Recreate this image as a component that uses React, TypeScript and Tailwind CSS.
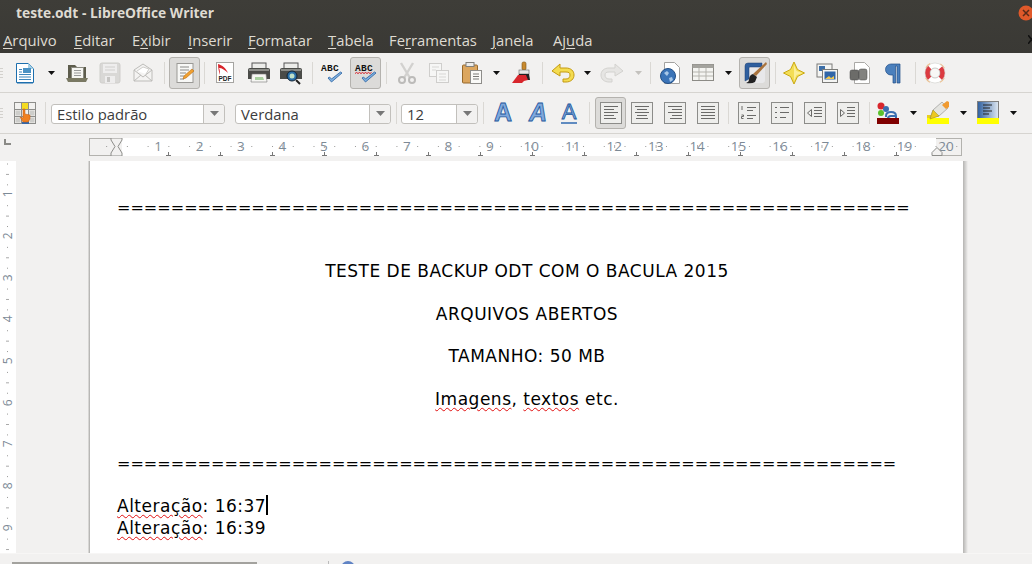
import React from "react";

const sans = "font-['Open_Sans',sans-serif]";

function Grip() {
  return (
    <div className="w-[3px] flex flex-col gap-[2px]">
      <div className="h-px bg-[#d3d1cd]" />
      <div className="h-px bg-[#d3d1cd]" />
      <div className="h-px bg-[#d3d1cd]" />
      <div className="h-px bg-[#d3d1cd]" />
    </div>
  );
}

function Sep({ className }: { className: string }) {
  return <div className={`w-px h-[22px] bg-[#dad8d4] ${className}`} />;
}

function Arrow({ className, grey }: { className: string; grey?: boolean }) {
  return (
    <svg width="7" height="4" viewBox="0 0 7 4" className={className}>
      <path d="M0 0h7L3.5 4z" fill={grey ? "#c4c2be" : "#111"} />
    </svg>
  );
}

function Pressed({ className, children }: { className: string; children: React.ReactNode }) {
  return (
    <div className={`w-[31px] h-[32px] flex items-center justify-center rounded-[3px] border border-[#b4b2ae] bg-[#dcdbd9] ${className}`}>
      {children}
    </div>
  );
}

function Ico({ className, w = 24, children }: { className?: string; w?: number; children: React.ReactNode }) {
  return (
    <svg width={w} height="24" viewBox={`0 0 ${w} 24`} className={`shrink-0 ${className ?? ""}`}>
      {children}
    </svg>
  );
}

function NewDoc({ className }: { className: string }) {
  return (
    <Ico className={className} w={22}>
      <path d="M2.5 2.5h12l5 5v14h-17z" fill="#fff" stroke="#1d6fae" />
      <path d="M14 2l6 6h-6z" fill="#a5d0e6" />
      <path d="M3 21h16v1.5H3z" fill="#1d6fae" />
      <rect x="9" y="7" width="8" height="5" fill="#4a92c4" />
      <path d="M5 8.500h3M5 11h3M5 13.500h12M5 16h12M5 18.500h12" stroke="#3d86bb" />
    </Ico>
  );
}

function OpenFolder({ className }: { className: string }) {
  return (
    <Ico className={className}>
      <path d="M3 4h7l2 2h9v11H3z" fill="#5d5c4c" />
      <rect x="6.500" y="6.500" width="12" height="11" fill="#f5f5f2" stroke="#8a8a80" />
      <path d="M9 9.500h7M9 12h7M9 14.500h7" stroke="#999" />
      <path d="M1 17h22l-2 4H3z" fill="#7a7963" />
    </Ico>
  );
}

function Save({ className }: { className: string }) {
  return (
    <Ico className={className}>
      <rect x="2" y="2" width="20" height="20" rx="2" fill="#d9d8d6" stroke="#cfcecb" />
      <rect x="5" y="3" width="14" height="9" fill="#eeeded" />
      <path d="M7 6h10M7 9h10" stroke="#d0cfcd" />
      <rect x="7" y="15" width="10" height="7" fill="#eeeded" />
      <rect x="9" y="16" width="3" height="5" fill="#c6c5c3" />
    </Ico>
  );
}

function Mail({ className }: { className: string }) {
  return (
    <Ico className={className} w={22}>
      <path d="M2 9l9-6 9 6v11H2z" fill="#f4f3f2" stroke="#bdbcb9" />
      <path d="M5 10l6-4 6 2-3 5" fill="#fff" stroke="#cfcecb" />
      <path d="M2 9l9 7 9-7M2 20l7-6M20 20l-7-6" fill="none" stroke="#bdbcb9" />
    </Ico>
  );
}

function EditDoc() {
  return (
    <Ico>
      <rect x="4" y="2.5" width="16" height="19" fill="#f8f8f6" stroke="#9a9996" />
      <path d="M7 6h9M7 9h9M7 12h6M7 15h4M7 18h4" stroke="#8a8a88" />
      <path d="M10 18l1-3 8-7 2 2-8 7z" fill="#f0a030" stroke="#b86c10" strokeWidth=".6" />
    </Ico>
  );
}

function Pdf({ className }: { className: string }) {
  return (
    <Ico className={className} w={22}>
      <rect x="2.5" y="1.5" width="17" height="20" fill="#fff" stroke="#a5a4a1" />
      <path d="M4 3c4 1 8 4 10 9-3-3-6-5-9-5 1 2 1 4 1 7-1-3-2-7-2-11z" fill="#d8262c" />
      <text x="4.5" y="20" fontSize="6.5" fontWeight="700" fontFamily="Liberation Sans" fill="#222">PDF</text>
    </Ico>
  );
}

function Printer({ className, zoom }: { className: string; zoom?: boolean }) {
  return (
    <Ico className={className}>
      <rect x="5" y="2" width="14" height="6" fill="#ececea" stroke="#555" />
      <path d="M1 9q0-2 2-2h18q2 0 2 2v9H1z" fill="#4a4b48" />
      <path d="M2 8h20v2H2z" fill="#8b8c88" />
      {zoom ? (
        <>
          <circle cx="13" cy="15" r="5" fill="#2a6fa8" stroke="#123" />
          <circle cx="13" cy="15" r="2.5" fill="#bfe0c8" />
          <path d="M17 19l4 4" stroke="#222" strokeWidth="2" />
        </>
      ) : (
        <>
          <path d="M5 13h14l1 8H4z" fill="#f6f6f3" stroke="#777" strokeWidth=".6" />
          <path d="M8 16h8l1 3H8z" fill="#a9d0a0" />
        </>
      )}
    </Ico>
  );
}

function Abc({ wave }: { wave?: boolean }) {
  return (
    <Ico>
      <text x="1" y="10" fontSize="9.5" fontWeight="700" fontFamily="Liberation Mono" fill="#111" letterSpacing=".3">ABC</text>
      {wave && <path d="M1 12.5l1.5-1 1.5 1 1.5-1 1.5 1 1.5-1 1.5 1 1.5-1 1.5 1 1.5-1 1.5 1 1.5-1" fill="none" stroke="#d8202a" />}
      <path d="M8 17l3.5 4L22 12l-1.5-1-9 7-2-2z" fill="#7fb0e0" stroke="#27609f" strokeWidth=".8" />
    </Ico>
  );
}

function Cut({ className }: { className: string }) {
  return (
    <Ico className={className} w={22}>
      <path d="M5 2l9 15M17 2L8 17" stroke="#d2d1cf" strokeWidth="2.4" />
      <circle cx="6" cy="19" r="3" fill="none" stroke="#bcbbb9" strokeWidth="2" />
      <circle cx="16" cy="19" r="3" fill="none" stroke="#bcbbb9" strokeWidth="2" />
    </Ico>
  );
}

function Copy({ className }: { className: string }) {
  return (
    <Ico className={className} w={22}>
      <rect x="1.5" y="2.5" width="12" height="13" fill="#f6f6f5" stroke="#cfcecc" />
      <rect x="8.5" y="9.5" width="12" height="12" fill="#f6f6f5" stroke="#cfcecc" />
      <path d="M4 6h7M4 9h4M11 13h7M11 16h7M11 19h7" stroke="#d8d7d5" />
    </Ico>
  );
}

function Paste({ className }: { className: string }) {
  return (
    <Ico className={className} w={22}>
      <rect x="1.5" y="4" width="15" height="18" rx="1" fill="#dca65e" stroke="#97682a" />
      <rect x="5" y="1.5" width="8" height="4" fill="#ececea" stroke="#807f7a" />
      <rect x="9.5" y="9.5" width="11" height="13" fill="#fafaf8" stroke="#8e8d8a" />
      <path d="M12 13h6M12 15.5h6M12 18h6" stroke="#7a7a78" />
    </Ico>
  );
}

function Brush({ className }: { className: string }) {
  return (
    <Ico className={className} w={22}>
      <rect x="11" y="1" width="4" height="8" rx="1.5" fill="#c98a2e" stroke="#7b5314" strokeWidth=".6" />
      <rect x="8" y="9" width="10" height="4" fill="#e8e8e6" stroke="#666" strokeWidth=".6" />
      <path d="M8 13h10l1 6H6z" fill="#222" />
      <path d="M1 22l6-8h8l2 5-4 1-2 2z" fill="#d8262c" />
    </Ico>
  );
}

function Undo({ className, grey }: { className: string; grey?: boolean }) {
  const fill = grey ? "#e6e5e3" : "#f4dc50";
  const line = grey ? "#d3d2cf" : "#c49a10";
  return (
    <Ico className={className}>
      <g transform={grey ? "matrix(-1 0 0 1 24 0)" : undefined}>
        <path d="M1 10l8-7v4h6c5 0 8 3 8 7s-3 7-8 7h-3v-3h3c3 0 4-2 4-4s-1-3-4-3H9v4z" fill={fill} stroke={line} />
      </g>
    </Ico>
  );
}

function GlobeDoc({ className }: { className: string }) {
  return (
    <Ico className={className} w={22}>
      <path d="M5.5 1.5h10l5 5v16h-15z" fill="#fff" stroke="#a3a2a0" />
      <circle cx="9" cy="15" r="7.5" fill="#3b74b8" stroke="#234f86" />
      <path d="M5 12l3-2 2 2-2 3zM10 17l3-1 1 3-3 2z" fill="#a9c8e8" />
    </Ico>
  );
}

function TableIcon({ className }: { className: string }) {
  return (
    <Ico className={className} w={22}>
      <rect x="0.5" y="3.5" width="21" height="16" fill="#f4f4f1" stroke="#8c8b86" />
      <rect x="0.5" y="3.5" width="21" height="3.5" fill="#a4a39e" />
      <path d="M7 7v12M14 7v12M1 11h20M1 15h20" stroke="#b5b4ae" />
    </Ico>
  );
}

function Draw() {
  return (
    <Ico>
      <rect x="2" y="2" width="20" height="20" rx="3" fill="#e8e8ea" />
      <path d="M2 20V5q0-3 3-3h14v4H7q-1 0-1 1v11z" fill="#2f5f9e" stroke="#1f3f70" strokeWidth=".5" />
      <path d="M23 1l1 2-11 12-3-2z" fill="#a9743e" />
      <path d="M10 13l4 3-2 5q-3 2-9 1 3-1 3-3 0-5 4-6z" fill="#222" />
    </Ico>
  );
}

function Star({ className }: { className: string }) {
  return (
    <Ico className={className} w={22}>
      <path d="M11 1l3.500 7.500L21.500 12l-7 3.500L11 23l-3.500-7.500L.5 12l7-3.500z" fill="#f3dd55" stroke="#c9a812" />
      <path d="M11 4l2.500 6 6 2-6 2-2.500 6z" fill="#fbef9a" />
    </Ico>
  );
}

function Gallery({ className }: { className: string }) {
  return (
    <Ico className={className} w={22}>
      <rect x="1" y="3" width="15" height="13" fill="#f5f5f3" stroke="#7b7b78" />
      <rect x="3" y="5" width="6" height="5" fill="#3c6ea8" />
      <rect x="6.5" y="8.5" width="15" height="13" fill="#f5f5f3" stroke="#7b7b78" />
      <rect x="8.5" y="10.5" width="11" height="8" fill="#2f65a8" />
      <path d="M9 18l4-3 2 2 3-2v3z" fill="#f0c850" />
    </Ico>
  );
}

function Database({ className }: { className: string }) {
  return (
    <Ico className={className} w={22}>
      <path d="M5.5 1.5h10l5 5v16h-15z" fill="#fff" stroke="#aaa9a6" />
      <rect x="1" y="9" width="9" height="10" rx="2" fill="#6c6c69" stroke="#444" strokeWidth=".5" />
      <rect x="10" y="8" width="8" height="11" rx="2" fill="#82827f" stroke="#444" strokeWidth=".5" />
    </Ico>
  );
}

function Pilcrow({ className }: { className: string }) {
  return (
    <Ico className={className} w={22}>
      <path d="M18 3H9a5.500 5.500 0 0 0 0 11h2v8h2.500V5h1.500v17H18z" fill="#4b80bd" stroke="#224f88" strokeWidth=".7" />
    </Ico>
  );
}

function Help({ className }: { className: string }) {
  return (
    <Ico className={className} w={22}>
      <circle cx="11" cy="12" r="10.500" fill="none" stroke="#efc08c" strokeWidth="1.200" strokeDasharray="6 10.490" strokeDashoffset="-5.250" />
      <circle cx="11" cy="12" r="7.500" fill="none" stroke="#fff" strokeWidth="5" />
      <circle cx="11" cy="12" r="7.500" fill="none" stroke="#dc3a40" strokeWidth="5" strokeDasharray="11.780 11.780" strokeDashoffset="5.890" />
      <circle cx="11" cy="12" r="10" fill="none" stroke="#c9c8c5" strokeWidth=".5" />
      <circle cx="11" cy="12" r="5" fill="#f8f8f6" stroke="#a8a7a4" strokeWidth=".6" />
    </Ico>
  );
}

function Styles({ className }: { className: string }) {
  return (
    <Ico className={className} w={22}>
      <rect x="0.5" y="1.500" width="21" height="21" fill="#f2f1ef" stroke="#8d8d8a" />
      <path d="M7.500 2v20M14.500 2v20M1 8.500h20M1 15.500h20" stroke="#8d8d8a" />
      <rect x="1.500" y="9.500" width="5" height="5" fill="#cdcdca" />
      <rect x="1.500" y="16.500" width="5" height="5" fill="#cdcdca" />
      <rect x="15.500" y="9.500" width="5" height="5" fill="#cdcdca" />
      <rect x="15.500" y="16.500" width="5" height="5" fill="#cdcdca" />
      <rect x="8" y="2" width="6" height="6" fill="#f4dc20" />
      <rect x="8" y="21" width="7" height="2" fill="#3467a8" />
      <path d="M9 8h2v5l5 1v4l-2 3H9l-3-5 3 1z" fill="#f08020" stroke="#c05a10" strokeWidth=".5" />
    </Ico>
  );
}

function Combo({ text, className, w }: { text: string; className: string; w: string }) {
  return (
    <div className={`h-[20px] mt-[1px] flex items-stretch rounded-[3px] border border-[#c2c0bc] bg-white ${w} ${className}`}>
      <div className="flex-1 pl-[5px] text-[14.800px] leading-[18px] text-[#3c3c3c] font-['Open_Sans',sans-serif] whitespace-nowrap overflow-hidden">{text}</div>
      <div className="w-[21px] flex items-center justify-center border-l border-[#c2c0bc] bg-[#f2f1f0] rounded-r-[3px]">
        <svg width="9" height="5" viewBox="0 0 9 5">
          <path d="M0 0h9L4.500 5z" fill="#777" />
        </svg>
      </div>
    </div>
  );
}

function LetterA({ className, italic, under, w }: { className: string; italic?: boolean; under?: boolean; w: number }) {
  return (
    <Ico className={`overflow-visible ${className}`} w={w}>
      <text
        x={w / 2}
        y={under ? 18 : 20}
        textAnchor="middle"
        fontSize={under ? 22 : 25}
        fontWeight={under ? 400 : 700}
        fontStyle={italic ? "italic" : "normal"}
        fontFamily="Liberation Sans"
        fill="#7fa8dc"
        stroke="#23589c"
        strokeWidth=".8"
      >
        A
      </text>
      {under && <path d="M1 22h16" stroke="#2f68b0" strokeWidth="1.500" />}
    </Ico>
  );
}

function Align({ className, lines }: { className?: string; lines: string }) {
  return (
    <Ico className={className} w={22}>
      <rect x="0.500" y="1.500" width="21" height="21" fill="#eeeeec" stroke="#8c8c89" />
      <path d={lines} stroke="#6a6a68" fill="none" />
    </Ico>
  );
}

function CharColor({ className }: { className: string }) {
  return (
    <Ico className={className} w={22}>
      <circle cx="4" cy="5" r="3.500" fill="#d8262c" />
      <circle cx="4" cy="12" r="3" fill="#5cc02c" />
      <circle cx="9" cy="8" r="3" fill="#3a6fb0" />
      <path d="M9 16v-1q0-4 5-4t5 4v5h-5q-3 0-3-2.500t3-2.500h4" fill="none" stroke="#3a6fb0" strokeWidth="2" />
      <rect x="0" y="17" width="22" height="6" fill="#800000" />
    </Ico>
  );
}

function Highlight({ className }: { className: string }) {
  return (
    <Ico className={className} w={22}>
      <rect x="0" y="17" width="22" height="6" fill="#ffff00" />
      <rect x="0" y="14" width="6" height="3" fill="#e8d020" />
      <path d="M3 17l3-8 9-8 6 6-9 8z" fill="#e4e4e0" stroke="#8a8a86" strokeWidth=".6" />
      <path d="M3 18l3-9 6 6z" fill="#ecc820" stroke="#a08a10" strokeWidth=".5" />
      <path d="M15 4l5-4 2 1v5l-3 2z" fill="#f09a30" />
    </Ico>
  );
}

function BgColor({ className }: { className: string }) {
  return (
    <Ico className={className} w={22}>
      <rect x="0.500" y="0.500" width="21" height="17" fill="url(#bgc)" stroke="#808080" />
      <defs>
        <linearGradient id="bgc" x1="0" x2="1">
          <stop offset="0" stopColor="#2f5f9e" />
          <stop offset="1" stopColor="#dfe8f2" />
        </linearGradient>
      </defs>
      <path d="M6 4h9M6 7h7M6 10h9M6 13h6" stroke="#222" />
      <rect x="0" y="17" width="22" height="6" fill="#ffff00" />
    </Ico>
  );
}

const cmNumbers = [1, 2, 3, 4, 5, 6, 7, 8, 9, 10, 11, 12, 13, 14, 15, 16, 17, 18, 19, 20];
const cm = 41.47;

function HRuler() {
  const ticks: number[] = [];
  for (let i = -1; i < 41; i++) ticks.push(i);
  const tabs: number[] = [];
  for (let x = 79; x < 840; x += 52) tabs.push(x);
  return (
    <div className="relative ml-[89px] mt-[4px] w-[873px] h-[18px] flex">
      <div className="w-[33px] border border-r-0 border-[#b3b2ae]" />
      <div className="flex-1 bg-white" />
      <div className="w-[26px] border border-l-0 border-[#b3b2ae]" />
      <div className="absolute inset-0 pl-[48.300px] flex">
        {cmNumbers.map((n) => (
          <span key={n} className="w-[41.470px] shrink-0 text-center text-[13.500px] leading-[17px] text-[#7d8a96] font-['Open_Sans',sans-serif]">
            {n}
          </span>
        ))}
      </div>
      <svg width="873" height="18" className="absolute left-0 top-0">
        {ticks.map((i) => {
          const x = 27.5 + (i * cm) / 2 + cm / 4;
          return <rect key={i} x={x} y="8" width="1" height="1" fill="#9a9a98" />;
        })}
        {ticks.map((i) => {
          const x = 27.5 + (i * cm) / 2 + cm / 4 + cm / 4;
          return i % 2 !== 0 ? <rect key={"m" + i} x={x} y="7" width="1" height="3" fill="#aaa" /> : null;
        })}
        {tabs.map((x) => (
          <path key={x} d={`M${x - 2} 17.500h5M${x + 0.5} 14v3`} stroke="#777" fill="none" />
        ))}
        <path d="M22 0h11v2l-4 6.500 4 6.500v3H22v-3l4-6.500-4-6.500z" fill="#f2f1f0" stroke="#8d8d8a" />
        <path d="M843 17.500v-3l5-5 5 5v3z" fill="#f2f1f0" stroke="#8d8d8a" />
      </svg>
    </div>
  );
}

function VRuler() {
  const dots: number[] = [];
  for (let i = 0; i < 40; i++) dots.push(i);
  return (
    <div className="relative w-[16px] h-full bg-white shrink-0 overflow-hidden">
      <div className="pt-[12.150px] flex flex-col items-center">
        {cmNumbers.slice(0, 9).map((n) => (
          <span key={n} className="h-[41.700px] w-[16px] shrink-0 flex items-center justify-center -rotate-90 text-[12px] text-[#7d8a96] font-['Open_Sans',sans-serif]">
            {n}
          </span>
        ))}
      </div>
      <svg width="16" height="400" className="absolute left-0 top-0">
        {dots.map((i) => {
          const y = 2.5 + i * 10.42;
          if (i % 4 === 3) return null;
          return i % 4 === 1 ? (
            <rect key={i} x="6" y={y} width="3" height="1" fill="#aaa" />
          ) : (
            <rect key={i} x="7" y={y} width="1" height="1" fill="#9a9a98" />
          );
        })}
      </svg>
    </div>
  );
}

function Spell({ children }: { children: string }) {
  return <span className="underline decoration-wavy decoration-[#e01010] decoration-1 underline-offset-2">{children}</span>;
}

function Line({ className, children }: { className?: string; children?: React.ReactNode }) {
  return <div className={`h-[21.400px] leading-[21.400px] whitespace-nowrap ${className ?? ""}`}>{children}</div>;
}

function Menu({ u, rest, pre, className }: { u: string; rest: string; pre?: string; className: string }) {
  return (
    <span className={`whitespace-nowrap ${className}`}>
      {pre}
      <span className="underline underline-offset-2">{u}</span>
      {rest}
    </span>
  );
}

export default function App() {
  return (
    <div className="w-[1032px] h-[564px] overflow-hidden flex flex-col bg-[#f2f1f0]">
      {/* barra de titulo e menu */}
      <div className={`relative h-[53px] shrink-0 bg-linear-to-b from-[#3e3d38] to-[#3a3935] text-[#dfdbd2] ${sans}`}>
        <div className="h-[27px] pl-[16px] flex items-center text-[13.800px] font-bold">teste.odt - LibreOffice Writer</div>
        <div className="h-[26px] pl-[3px] flex items-center text-[14.800px]">
          <Menu u="A" rest="rquivo" className="w-[71px]" />
          <Menu u="E" rest="ditar" className="w-[58px]" />
          <Menu pre="E" u="x" rest="ibir" className="w-[56px]" />
          <Menu u="I" rest="nserir" className="w-[60px]" />
          <Menu u="F" rest="ormatar" className="w-[80px]" />
          <Menu u="T" rest="abela" className="w-[61px]" />
          <Menu pre="Fe" u="r" rest="ramentas" className="w-[103px]" />
          <Menu u="J" rest="anela" className="w-[61px]" />
          <Menu pre="Aj" u="u" rest="da" className="w-[50px]" />
        </div>
        <svg width="14" height="16" viewBox="0 0 14 16" className="absolute right-0 top-[5px]">
          <circle cx="8" cy="8" r="7.500" fill="#e0592a" />
          <path d="M5 5l6 6M11 5l-6 6" stroke="#5a2a18" strokeWidth="1.500" />
        </svg>
        <svg width="4" height="9" viewBox="0 0 4 9" className="absolute right-0 top-[35px]">
          <path d="M0 0l7 9M7 0L0 9" stroke="#111" strokeWidth="1.600" />
        </svg>
      </div>

      {/* barra padrao */}
      <div className="h-[40px] shrink-0 flex items-center border-b border-[#d6d4d0]">
        <Grip />
        <NewDoc className="ml-[11px]" />
        <Arrow className="ml-[12px]" />
        <OpenFolder className="ml-[10px]" />
        <Save className="ml-[9px]" />
        <Mail className="ml-[10px]" />
        <Sep className="ml-[10px]" />
        <Pressed className="ml-[4px]"><EditDoc /></Pressed>
        <Sep className="ml-[4px]" />
        <Pdf className="ml-[9px]" />
        <Printer className="ml-[11px]" />
        <Printer zoom className="ml-[8px]" />
        <Sep className="ml-[9px]" />
        <div className="ml-[7px]"><Abc /></div>
        <Pressed className="ml-[6px]"><Abc wave /></Pressed>
        <Sep className="ml-[5px]" />
        <Cut className="ml-[9px]" />
        <Copy className="ml-[10px]" />
        <Paste className="ml-[11px]" />
        <Arrow className="ml-[10px]" />
        <Brush className="ml-[11px]" />
        <Sep className="ml-[9px]" />
        <Undo className="ml-[8px]" />
        <Arrow className="ml-[9px]" />
        <Undo grey className="ml-[9px]" />
        <Arrow grey className="ml-[11px]" />
        <Sep className="ml-[8px]" />
        <GlobeDoc className="ml-[8px]" />
        <TableIcon className="ml-[11px]" />
        <Arrow className="ml-[11px]" />
        <Pressed className="ml-[7px]"><Draw /></Pressed>
        <Sep className="ml-[5px]" />
        <Star className="ml-[7px]" />
        <Gallery className="ml-[11px]" />
        <Database className="ml-[11px]" />
        <Pilcrow className="ml-[11px]" />
        <Sep className="ml-[11px]" />
        <Help className="ml-[8px]" />
      </div>

      {/* barra de formatacao */}
      <div className="h-[41px] shrink-0 flex items-center border-b border-[#d6d4d0]">
        <Grip />
        <Styles className="ml-[11px]" />
        <Sep className="ml-[9px]" />
        <Combo text="Estilo padrão" w="w-[174px]" className="ml-[5px]" />
        <Combo text="Verdana" w="w-[156px]" className="ml-[10px]" />
        <Sep className="ml-[5px]" />
        <Combo text="12" w="w-[77px]" className="ml-[4px]" />
        <Sep className="ml-[5px]" />
        <LetterA w={24} className="ml-[7px]" />
        <LetterA w={24} italic className="ml-[11px]" />
        <LetterA w={18} under className="ml-[10px]" />
        <Sep className="ml-[11px]" />
        <Pressed className="ml-[5px]"><Align lines="M4 5.500h14M4 8.500h10M4 11.500h14M4 14.500h10M4 17.500h12" /></Pressed>
        <Align className="ml-[5px]" lines="M4 5.500h14M6 8.500h10M4 11.500h14M6 14.500h10M5 17.500h12" />
        <Align className="ml-[11px]" lines="M4 5.500h14M8 8.500h10M4 11.500h14M8 14.500h10M6 17.500h12" />
        <Align className="ml-[11px]" lines="M4 5.500h14M4 8.500h14M4 11.500h14M4 14.500h14M4 17.500h14" />
        <Sep className="ml-[9px]" />
        <Align className="ml-[9px]" lines="M9 6.500h9M9 9.500h6M9 14.500h9M9 17.500h6M4 5v4M3.500 14h2v1.500h-2v2h2" />
        <Align className="ml-[11px]" lines="M9 6.500h9M9 11.500h9M9 16.500h6M4 6.500h2M4 11.500h2M4 16.500h2" />
        <Align className="ml-[11px]" lines="M10 6.500h8M10 9.500h8M10 12.500h8M10 15.500h8M3.500 12l4-3.500v7z" />
        <Align className="ml-[11px]" lines="M10 6.500h8M10 9.500h8M10 12.500h8M10 15.500h8M7.500 12l-4-3.500v7z" />
        <Sep className="ml-[10px]" />
        <CharColor className="ml-[7px]" />
        <Arrow className="ml-[11px]" />
        <Highlight className="ml-[10px]" />
        <Arrow className="ml-[11px]" />
        <BgColor className="ml-[10px]" />
        <Arrow className="ml-[11px]" />
      </div>

      {/* regua horizontal */}
      <div className="h-[27px] shrink-0 relative">
        <HRuler />
        <div className="absolute left-[4px] top-[5px] w-[7px] h-[6px] border-l-2 border-b-2 border-[#8a8a86]" />
      </div>

      {/* area do documento */}
      <div className="h-[392px] shrink-0 flex overflow-hidden">
        <VRuler />
        <div className="w-[74px] flex justify-end shrink-0">
          <div className="w-[2px] bg-linear-to-r from-[#e8e7e5] to-[#a9a8a6]" />
        </div>
        <div className="w-[873px] shrink-0 bg-white pt-[35.700px] pl-[28px] text-[17px] tracking-[0.5px] text-black font-['DejaVu_Sans',sans-serif]">
          <Line className="text-[16px] tracking-[0.03px] -ml-[1px]">===========================================================</Line>
          <Line />
          <Line />
          <Line className="text-center pr-[27px]">TESTE DE BACKUP ODT COM O BACULA 2015</Line>
          <Line />
          <Line className="text-center pr-[27px]">ARQUIVOS ABERTOS</Line>
          <Line />
          <Line className="text-center pr-[27px]">TAMANHO: 50 MB</Line>
          <Line />
          <Line className="text-center pr-[27px]"><Spell>Imagens</Spell>, <Spell>textos</Spell> etc.</Line>
          <Line />
          <Line />
          <Line className="text-[16px] tracking-[0.03px] -ml-[1px]">==========================================================</Line>
          <Line />
          <Line>
            <span className="relative -ml-[1px]">
              <Spell>Alteração</Spell>: 16:37
              <span className="absolute right-[-2px] top-[-1px] w-[2px] h-[20px] bg-black" />
            </span>
          </Line>
          <Line className="-ml-[1px]"><Spell>Alteração</Spell>: 16:39</Line>
        </div>
        <div className="w-[5px] shrink-0 bg-linear-to-r from-[#b5b4b2] to-[#f2f1f0]" />
      </div>

      {/* resto da barra de rolagem */}
      <div className="flex-1 relative border-t border-[#f7f6f5]">
        <div className="absolute left-[12px] top-[8px] w-[245px] h-[3px] bg-[#a3a29e]" />
        <div className="absolute left-[328px] top-[7px] w-px h-[4px] bg-[#bbb]" />
        <div className="absolute left-[341px] top-[7px] w-[14px] h-[14px] rounded-full bg-[#5f83c4]" />
      </div>
    </div>
  );
}
